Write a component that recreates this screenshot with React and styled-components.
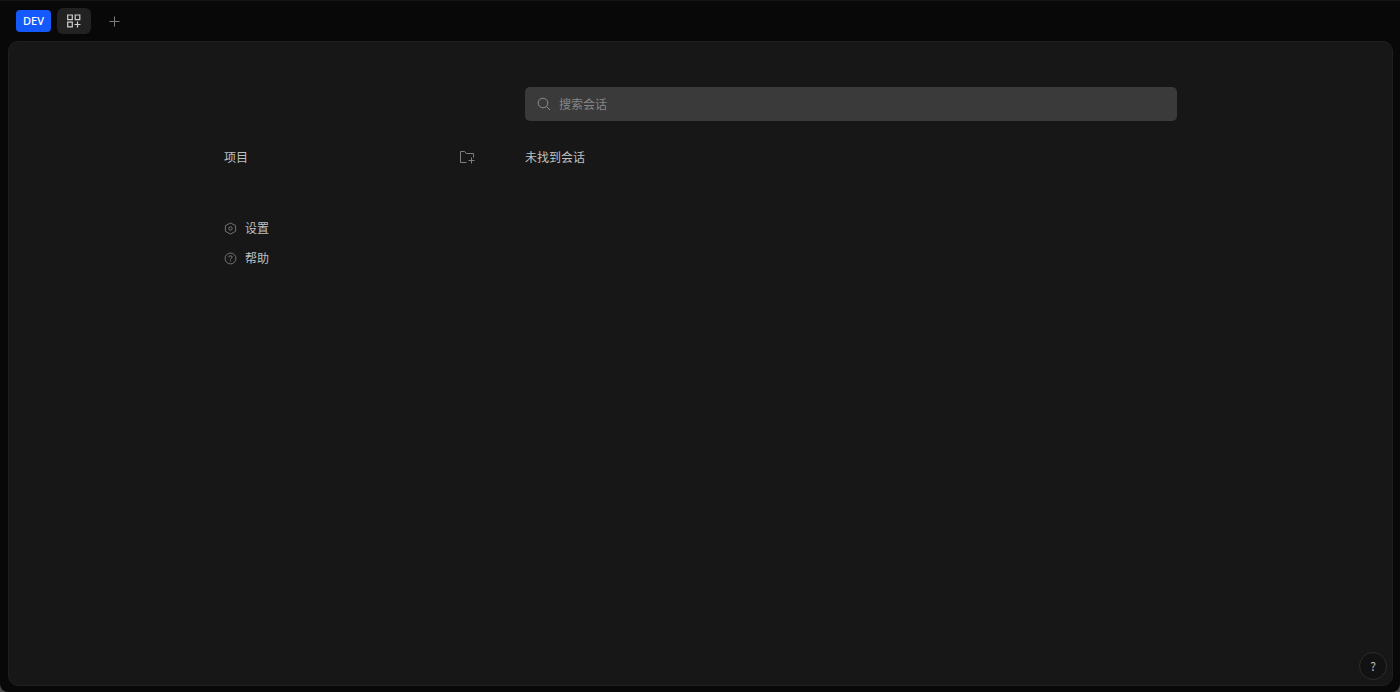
import React from 'react';
import styled, { createGlobalStyle } from 'styled-components';

const GlobalStyle = createGlobalStyle`
  * { box-sizing: border-box; }
  html { background: #4a4a4a; }
  body {
    margin: 0;
    font-family: "Noto Sans CJK SC", "Noto Sans", sans-serif;
    font-size: 12px;
    line-height: 18px;
    color: #c0c0c0;
  }
  button, input { font: inherit; color: inherit; }
  svg { flex: none; display: block; }
`

const Window = styled.div`
  display: flex;
  flex-direction: column;
  min-height: 100vh;
  padding: 0 7px 6px 8px;
  background: #080808;
  border-top: 1px solid #151515;
  border-radius: 0 0 8px 8px;
`
const TitleBar = styled.header`
  display: flex;
  align-items: center;
  gap: 6px;
  height: 40px;
  padding: 0 8px;
`
const Button = styled.button`
  display: flex;
  align-items: center;
  justify-content: center;
  padding: 0;
  border: 0;
  background: none;
  cursor: pointer;
`
const DevButton = styled(Button)`
  width: 35px;
  height: 22px;
  border-radius: 4px;
  background: #1459fb;
  color: #fff;
  font-family: "Noto Sans", sans-serif;
  font-size: 11px;
  font-weight: 500;
`
const TabButton = styled(Button)`
  width: 34px;
  height: 26px;
  border-radius: 6px;
  background: ${({ $active }) => ($active ? '#222' : 'transparent')};
  color: ${({ $active }) => ($active ? '#d0d0d0' : '#7c7c7c')};
`
const Panel = styled.main`
  flex: 1;
  position: relative;
  padding: 45px 24px;
  background: #171717;
  border: 1px solid #1f1f1f;
  border-radius: 10px;
`
const Content = styled.div`
  display: grid;
  grid-template-columns: 253px minmax(0, 1fr);
  column-gap: 48px;
  row-gap: 27px;
  max-width: 953px;
  margin: 0 auto;
`
const Search = styled.label`
  grid-column: 2;
  display: flex;
  align-items: center;
  gap: 8px;
  height: 34px;
  padding: 0 12px;
  border-radius: 5px;
  background: #3a3a3a;
  color: #8c8c8c;
`
const SearchInput = styled.input`
  flex: 1;
  min-width: 0;
  padding: 0;
  border: 0;
  outline: 0;
  background: none;
  color: #e0e0e0;
  &::placeholder { color: #858585; opacity: 1; }
`
const SideHeader = styled.div`
  display: flex;
  align-items: center;
  justify-content: space-between;
  height: 18px;
`
const Heading = styled.h2`
  margin: 0;
  font-size: 12px;
  font-weight: 400;
`
const IconButton = styled(Button)`
  width: 20px;
  height: 20px;
  color: #8a8a8a;
`
const Links = styled.nav`
  display: flex;
  flex-direction: column;
  gap: 12px;
  margin-top: 53px;
`
const LinkButton = styled(Button)`
  align-self: flex-start;
  gap: 8px;
  svg { color: #8a8a8a; }
`
const HelpButton = styled(Button)`
  position: absolute;
  right: 5px;
  bottom: 5px;
  width: 28px;
  height: 28px;
  border: 1px solid #2c2c2c;
  border-radius: 50%;
  background: #121212;
`

const Icon = ({ size = 14, children }) => (
  <svg width={size} height={size} viewBox={`0 0 ${size} ${size}`} fill="none" stroke="currentColor" aria-hidden="true">
    {children}
  </svg>
)

const GridPlusIcon = () => (
  <Icon>
    <path d="M.7 1h4.6v4.6H.7zM8.2 1h4.6v4.6H8.2zM.7 8.2h4.6v4.6H.7zM10.5 7.5v6M7.5 10.5h6" strokeWidth="1.2" />
  </Icon>
)
const PlusIcon = () => (
  <Icon>
    <path d="M7.5 2.5v10M2.5 7.5h10" />
  </Icon>
)
const SearchIcon = () => (
  <Icon>
    <circle cx="6" cy="6" r="4.8" />
    <path d="M9.5 9.5l3.5 3.5" />
  </Icon>
)
const FolderPlusIcon = () => (
  <Icon size={16}>
    <path d="M7.5 13.5h-6v-11h4.2l1.5 2h7.3v4M12.5 8.5v6M9.5 11.5h6" strokeWidth="0.9" />
  </Icon>
)
const SettingsIcon = () => (
  <Icon size={13}>
    <path d="M6.5.9l5.1 2.8v5.6l-5.1 2.8-5.1-2.8V3.7z" strokeWidth="0.8" />
    <circle cx="6.5" cy="6.5" r="1.7" strokeWidth="0.8" />
  </Icon>
)
const HelpIcon = () => (
  <Icon size={13}>
    <circle cx="6.5" cy="6.5" r="5.4" strokeWidth="0.8" />
    <path d="M4.9 5.3V4.5q.4-.6 1.6-.6 1.7 0 1.7 1.2 0 .8-.9 1.2-.8.4-.8 1.1M6.5 8.4v1.1" strokeWidth="0.9" />
  </Icon>
)

const App = () => {
  const [query, setQuery] = React.useState('');
  return (
    <>
      <GlobalStyle />
      <Window>
        <TitleBar>
          <DevButton type="button">DEV</DevButton>
          <TabButton type="button" $active aria-label="项目"><GridPlusIcon /></TabButton>
          <TabButton type="button"><PlusIcon /></TabButton>
        </TitleBar>
        <Panel>
          <Content>
            <Search>
              <SearchIcon />
              <SearchInput placeholder="搜索会话" value={query} onChange={(e) => setQuery(e.target.value)} />
            </Search>
            <aside>
              <SideHeader>
                <Heading>项目</Heading>
                <IconButton type="button"><FolderPlusIcon /></IconButton>
              </SideHeader>
              <Links>
                <LinkButton type="button"><SettingsIcon />设置</LinkButton>
                <LinkButton type="button"><HelpIcon />帮助</LinkButton>
              </Links>
            </aside>
            <Heading>未找到会话</Heading>
          </Content>
          <HelpButton type="button">?</HelpButton>
        </Panel>
      </Window>
    </>
  )
}

export default App;
